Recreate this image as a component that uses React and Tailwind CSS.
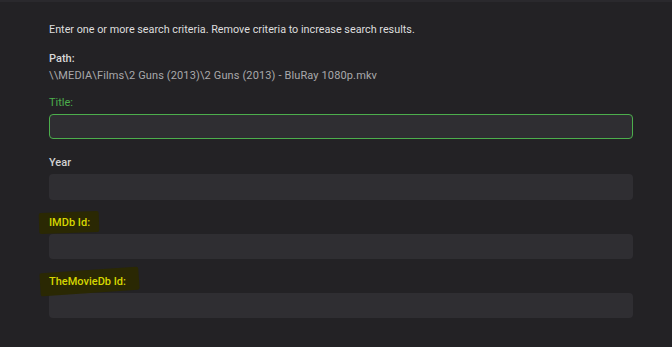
import React from 'react'

const font = { fontFamily: 'Roboto, "Noto Sans", Arial, sans-serif' }

const Marker = ({ className }) => (
  <span className={`absolute bg-[#2a2803] rounded-[2px] ${className}`} />
)

const Field = ({ label, className = '', labelClass, marker, inputClass = '' }) => (
  <div className={className}>
    <div className="leading-4">
      <span className={`relative inline-block ${labelClass}`}>
        {marker}
        <span className="relative">{label}</span>
      </span>
    </div>
    <div className={`mt-[3px] h-[25px] rounded bg-[#2f2e32] ${inputClass}`} />
  </div>
)

const App = () => {
  return (
    <div className="w-[672px] h-[347px] bg-[#232225] text-[11px] overflow-hidden" style={font}>
      <div className="h-[2px] bg-[#2a292d]" />
      <div className="pl-[49px] pr-[39px] pt-[20px]">
        <p className="leading-4 text-[10.8px] text-[#dedede]">
          Enter one or more search criteria. Remove criteria to increase search results.
        </p>

        <div className="mt-[13px]">
          <div className="leading-4 font-medium text-[#d8d8d8]">Path:</div>
          <div className="leading-[17px] tracking-[0.13px] text-[#a9a9ab]">
            \\MEDIA\Films\2 Guns (2013)\2 Guns (2013) - BluRay 1080p.mkv
          </div>
        </div>

        <Field
          className="mt-[11px]"
          label="Title:"
          labelClass="text-[#4cae4c]"
          inputClass="border border-[#4cae4c]"
        />
        <Field
          className="mt-[16px]"
          label="Year"
          labelClass="font-medium text-[#d2d2d2]"
          inputClass="h-[26px] mt-[2px]"
        />
        <Field
          className="mt-[15px]"
          label="IMDb Id:"
          labelClass="font-medium text-[#d6d600]"
          marker={<Marker className="-left-[10px] -right-[9px] -top-[3px] -bottom-[2px] -rotate-2" />}
        />
        <Field
          className="mt-[15px]"
          label="TheMovieDb Id:"
          labelClass="font-medium text-[#d6d600]"
          marker={<Marker className="-left-[9px] -right-[13px] -top-[4px] -bottom-[3px] -rotate-[4deg]" />}
        />
      </div>
    </div>
  )
}

export default App
